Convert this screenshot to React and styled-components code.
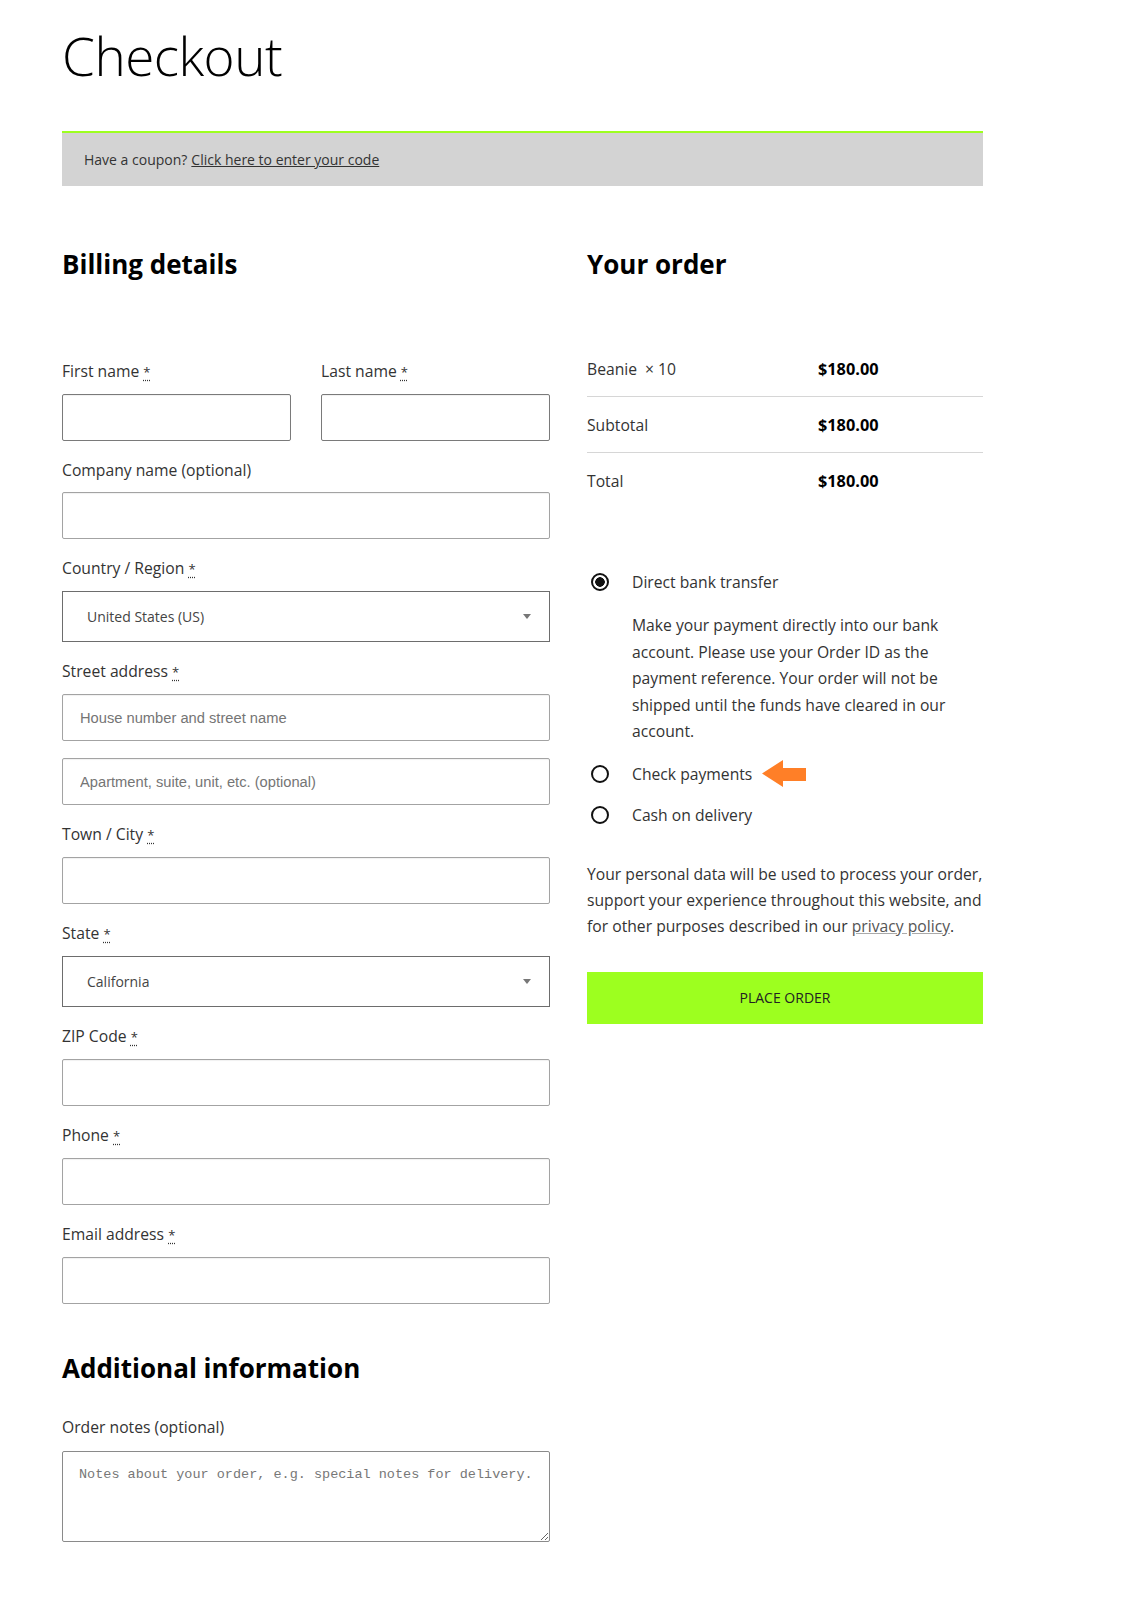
import React from "react";
import styled, { createGlobalStyle } from "styled-components";

const GlobalStyle = createGlobalStyle`
    body {
        margin: 0;
        background: #fff;
        font-family: "Open Sans", "Noto Sans", sans-serif;
        color: #333;
    }
    * {
        box-sizing: border-box;
    }
`;

const billingFields = [
    { label: "Company name", optional: true },
    { label: "Country / Region", required: true, select: "United States (US)" },
    {
        label: "Street address",
        required: true,
        inputs: ["House number and street name", "Apartment, suite, unit, etc. (optional)"],
    },
    { label: "Town / City", required: true },
    { label: "State", required: true, select: "California" },
    { label: "ZIP Code", required: true },
    { label: "Phone", required: true },
    { label: "Email address", required: true },
];

const orderRows = [
    { name: "Beanie", qty: 10, price: "$180.00" },
    { name: "Subtotal", price: "$180.00" },
    { name: "Total", price: "$180.00" },
];

const Required = () => <Star>*</Star>;

const Field = ({ label, required, optional, select, inputs }) => (
    <FieldRow>
        <Label>
            {label}
            {optional && " (optional)"}
            {required && (
                <>
                    {" "}
                    <Required />
                </>
            )}
        </Label>
        {select ? (
            <SelectBox>
                <span>{select}</span>
                <Caret />
            </SelectBox>
        ) : inputs ? (
            <InputStack>
                {inputs.map((ph) => (
                    <TextInput key={ph} placeholder={ph} />
                ))}
            </InputStack>
        ) : (
            <TextInput />
        )}
    </FieldRow>
);

const Radio = ({ checked }) => <RadioCircle $checked={checked} />;

const Arrow = () => (
    <svg width="44" height="28" viewBox="0 0 44 28">
        <path d="M0 13.5 L21 0 L21 8 L44 8 L44 21 L21 21 L21 27 Z" fill="#ff7f27" />
    </svg>
);

export default function App() {
    return (
        <Page>
            <GlobalStyle />
            <Title>Checkout</Title>
            <CouponBar>
                Have a coupon? <CouponLink href="#">Click here to enter your code</CouponLink>
            </CouponBar>

            <Columns>
                <Billing>
                    <SectionTitle $gap={78}>Billing details</SectionTitle>
                    <NameRow>
                        <FieldRow>
                            <Label>
                                First name <Required />
                            </Label>
                            <TextInput $dark />
                        </FieldRow>
                        <FieldRow>
                            <Label>
                                Last name <Required />
                            </Label>
                            <TextInput $dark />
                        </FieldRow>
                    </NameRow>
                    {billingFields.map((f) => (
                        <Field key={f.label} {...f} />
                    ))}

                    <AdditionalTitle $gap={30}>Additional information</AdditionalTitle>
                    <FieldRow>
                        <Label $tight>Order notes (optional)</Label>
                        <Notes placeholder="Notes about your order, e.g. special notes for delivery." />
                    </FieldRow>
                </Billing>

                <Order>
                    <SectionTitle $gap={60}>Your order</SectionTitle>
                    <OrderTable>
                        {orderRows.map((row) => (
                            <OrderRow key={row.name}>
                                <OrderName>
                                    {row.name}
                                    {row.qty && <Qty>× {row.qty}</Qty>}
                                </OrderName>
                                <OrderPrice>{row.price}</OrderPrice>
                            </OrderRow>
                        ))}
                    </OrderTable>

                    <Payments>
                        <PaymentItem>
                            <Radio checked />
                            <PaymentLabel>Direct bank transfer</PaymentLabel>
                        </PaymentItem>
                        <PaymentBox>
                            Make your payment directly into our bank account. Please use your Order
                            ID as the payment reference. Your order will not be shipped until the
                            funds have cleared in our account.
                        </PaymentBox>
                        <PaymentItem>
                            <Radio />
                            <PaymentLabel>Check payments</PaymentLabel>
                            <Arrow />
                        </PaymentItem>
                        <PaymentItem>
                            <Radio />
                            <PaymentLabel>Cash on delivery</PaymentLabel>
                        </PaymentItem>
                    </Payments>

                    <Privacy>
                        Your personal data will be used to process your order, support your
                        experience throughout this website, and for other purposes described in
                        our <PrivacyLink href="#">privacy policy</PrivacyLink>.
                    </Privacy>

                    <PlaceOrder>PLACE ORDER</PlaceOrder>
                </Order>
            </Columns>
        </Page>
    );
}

const Page = styled.main`
    width: 921px;
    margin-left: 62px;
    padding: 22px 0 60px;
`;
const Title = styled.h1`
    margin: 0;
    font-size: 53px;
    font-weight: 300;
    line-height: 68px;
    color: #000;
    letter-spacing: -0.5px;
`;
const CouponBar = styled.div`
    margin-top: 41px;
    height: 55px;
    display: flex;
    align-items: center;
    gap: 4px;
    padding: 0 0 0 22px;
    background: #d3d3d3;
    border-top: 2px solid #9dff1f;
    font-size: 14px;
    color: #333;
`;
const CouponLink = styled.a`
    color: #333;
    text-decoration: underline;
`;
const Columns = styled.div`
    display: flex;
    justify-content: space-between;
    margin-top: 61px;
`;
const Billing = styled.section`
    width: 488px;
    display: flex;
    flex-direction: column;
`;
const Order = styled.section`
    width: 396px;
    display: flex;
    flex-direction: column;
`;
const SectionTitle = styled.h3`
    margin: 0 0 ${(p) => p.$gap}px;
    font-size: 26px;
    font-weight: 700;
    line-height: 34px;
    color: #000;
`;
const AdditionalTitle = styled(SectionTitle)`
    margin-top: 30px;
`;
const NameRow = styled.div`
    display: grid;
    grid-template-columns: 229px 229px;
    justify-content: space-between;
`;
const FieldRow = styled.div`
    display: flex;
    flex-direction: column;
    padding-bottom: 17px;
`;
const Label = styled.label`
    font-size: 15.7px;
    line-height: 24px;
    color: #333;
    margin-bottom: ${(p) => (p.$tight ? 12 : 10)}px;
`;
const Star = styled.abbr`
    text-decoration: underline dotted;
    text-underline-offset: 3px;
    font-size: 13px;
    color: #333;
`;
const InputStack = styled.div`
    display: flex;
    flex-direction: column;
    gap: 17px;
`;
const TextInput = styled.input`
    height: 47px;
    width: 100%;
    padding: 0 17px;
    border: 1px solid ${(p) => (p.$dark ? "#7a7a7a" : "#a3a3a3")};
    border-radius: 2px;
    box-shadow: inset 0 1px 1px rgba(0, 0, 0, 0.06);
    background: #fff;
    font-family: "Liberation Sans", Arial, sans-serif;
    font-size: 14.7px;
    &::placeholder {
        color: #757575;
    }
`;
const SelectBox = styled.div`
    height: 51px;
    display: flex;
    align-items: center;
    justify-content: space-between;
    padding: 0 12px 0 24px;
    border: 1px solid #6d6d6d;
    background: #fff;
    font-size: 14px;
    color: #444;
`;
const Caret = styled.span`
    width: 0;
    height: 0;
    border-left: 4px solid transparent;
    border-right: 4px solid transparent;
    border-top: 5px solid #777;
    margin-right: 6px;
`;
const Notes = styled.textarea`
    height: 91px;
    width: 100%;
    padding: 15px 16px;
    border: 1px solid #8a8a8a;
    border-radius: 2px;
    font-family: "Liberation Mono", "DejaVu Sans Mono", monospace;
    font-size: 13.5px;
    resize: vertical;
    &::placeholder {
        color: #777;
    }
`;
const OrderTable = styled.div`
    display: flex;
    flex-direction: column;
`;
const OrderRow = styled.div`
    display: grid;
    grid-template-columns: 231px 1fr;
    align-items: center;
    height: 56px;
    border-bottom: 1px solid #d6d6d6;
    &:last-child {
        border-bottom: none;
    }
`;
const OrderName = styled.span`
    font-size: 15.7px;
    color: #333;
`;
const Qty = styled.span`
    margin-left: 8px;
`;
const OrderPrice = styled.span`
    font-size: 16.3px;
    font-weight: 700;
    color: #000;
`;
const Payments = styled.div`
    display: flex;
    flex-direction: column;
    margin-top: 52px;
`;
const PaymentItem = styled.div`
    display: flex;
    align-items: center;
    height: 41px;
    padding-left: 4px;
`;
const RadioCircle = styled.span`
    width: 18px;
    height: 18px;
    border-radius: 50%;
    border: 2px solid #111;
    flex-shrink: 0;
    background: ${(p) => (p.$checked ? "radial-gradient(circle, #111 0 4.5px, #fff 5px)" : "#fff")};
`;
const PaymentLabel = styled.span`
    margin: 0 10px 0 23px;
    font-size: 15.7px;
    color: #333;
`;
const PaymentBox = styled.p`
    margin: 10px 0 9px 45px;
    padding-right: 20px;
    font-size: 15.7px;
    line-height: 26.5px;
    color: #333;
`;
const Privacy = styled.p`
    margin: 25px 0 0;
    font-size: 15.7px;
    line-height: 26px;
    color: #333;
`;
const PrivacyLink = styled.a`
    color: #555;
    text-decoration: underline;
    text-decoration-color: #aaa;
`;
const PlaceOrder = styled.button`
    margin-top: 33px;
    height: 52px;
    width: 100%;
    border: none;
    background: #9dff1f;
    font-family: "Open Sans", sans-serif;
    font-size: 14px;
    color: #222;
    cursor: pointer;
`;
